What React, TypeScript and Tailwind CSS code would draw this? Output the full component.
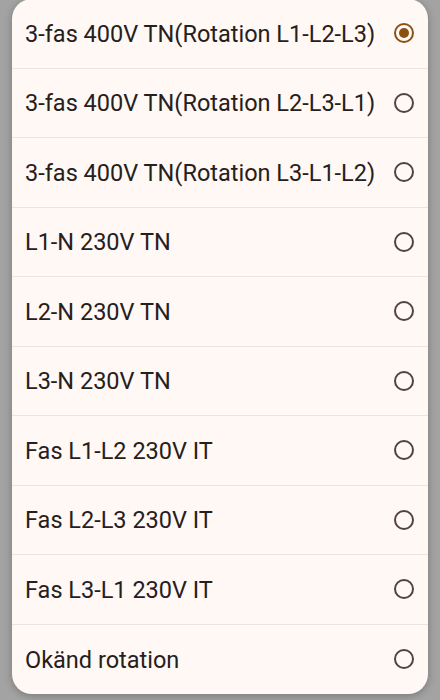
// Phase rotation picker - list of supply options in a rounded sheet
import React, { useState } from 'react';

const OPTIONS = [
  '3-fas 400V TN(Rotation L1-L2-L3)',
  '3-fas 400V TN(Rotation L2-L3-L1)',
  '3-fas 400V TN(Rotation L3-L1-L2)',
  'L1-N 230V TN',
  'L2-N 230V TN',
  'L3-N 230V TN',
  'Fas L1-L2 230V IT',
  'Fas L2-L3 230V IT',
  'Fas L3-L1 230V IT',
  'Okänd rotation',
];

const Radio: React.FC<{ checked: boolean }> = ({ checked }) => (
  <svg width="22" height="22" viewBox="0 0 22 22" className="shrink-0">
    <circle
      cx="11"
      cy="11"
      r="9"
      fill="none"
      stroke={checked ? '#8b5113' : '#52443c'}
      strokeWidth="2"
    />
    {checked && <circle cx="11" cy="11" r="5" fill="#8b5113" />}
  </svg>
);

export default function App() {
  const [selected, setSelected] = useState(0);

  return (
    <div className="w-[440px] h-[700px] overflow-hidden bg-[#a3a3a3]">
      <div className="mx-3 -mt-px rounded-[20px] bg-[#fff8f5] shadow-[0_2px_8px_rgba(0,0,0,0.25)] overflow-hidden">
        {OPTIONS.map((label, i) => (
          <button
            key={label}
            onClick={() => setSelected(i)}
            className={`w-full h-[69.5px] flex items-center justify-between pl-[13px] pr-[13px] text-left ${
              i < OPTIONS.length - 1 ? 'border-b border-[#efe3de]' : ''
            }`}
          >
            <span className="pt-[2px] text-[23.5px] font-normal text-[#26201c] font-['Roboto',sans-serif]">
              {label}
            </span>
            <Radio checked={selected === i} />
          </button>
        ))}
      </div>
    </div>
  );
}
